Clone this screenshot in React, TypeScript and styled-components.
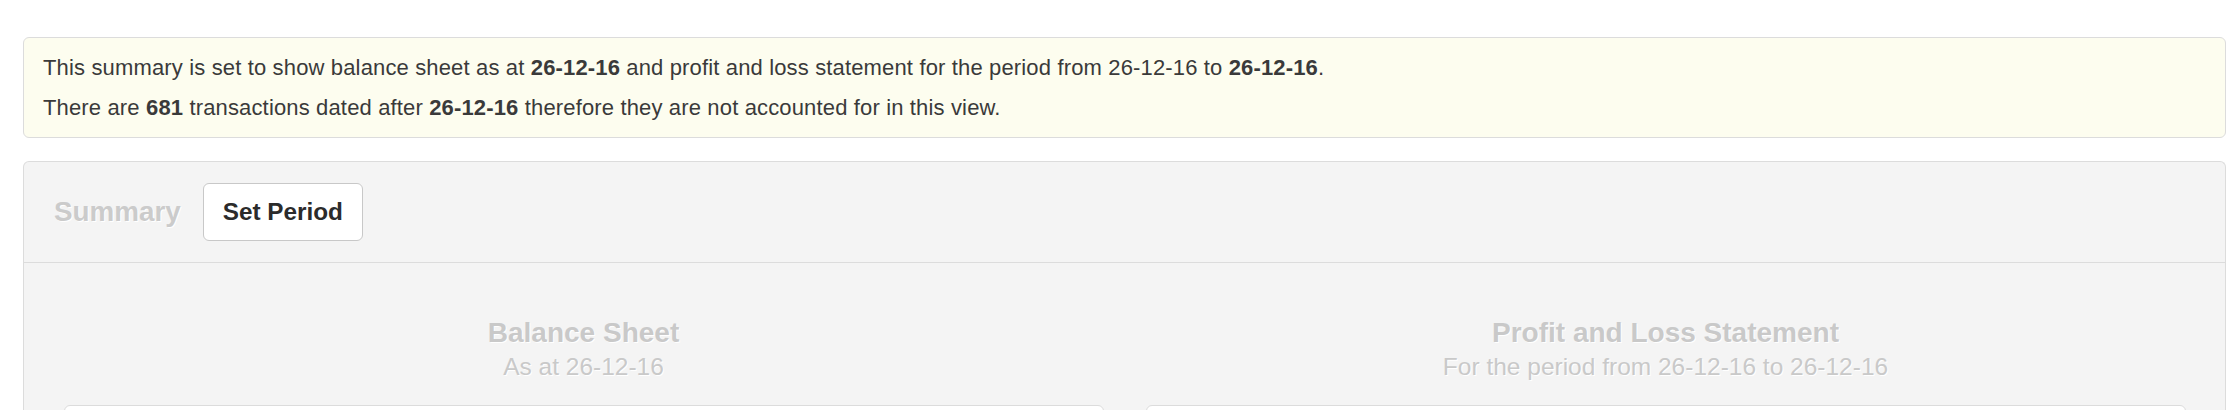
import * as React from 'react';
import styled, { createGlobalStyle } from 'styled-components';

const GlobalStyle = createGlobalStyle`
  html, body {
    margin: 0;
    padding: 0;
    background: #fff;
  }
  body {
    font-family: 'Liberation Sans', Arial, Helvetica, sans-serif;
    color: #333;
    overflow: hidden;
  }
`;

const Page = styled.div`
  padding: 37px 6px 0 23px;
`;

const Notice = styled.div`
  background-color: #fdfdef;
  border: 1.4px solid #dcdcdc;
  border-radius: 6px;
  padding: 16px 19px 15px;
  font-size: 22px;
  letter-spacing: 0.15px;
  color: #3a3a3a;
`;

const NoticeLine = styled.p`
  margin: 0;
  line-height: 28px;

  & + & {
    margin-top: 12px;
  }

  b {
    font-weight: bold;
  }
`;

const Panel = styled.div`
  margin-top: 23px;
  background-color: #f4f4f4;
  border: 1.4px solid #dcdcdc;
  border-bottom: none;
  border-radius: 6px 6px 0 0;
  height: 260px;
`;

const PanelHeader = styled.div`
  display: flex;
  align-items: center;
  gap: 22px;
  height: 100px;
  padding: 0 30px;
  border-bottom: 1.4px solid #dcdcdc;
`;

const Muted = styled.span`
  font-size: 27.8px;
  font-weight: bold;
  color: #cbcbcb;
  text-shadow: 1px 1px 0 #fff;
`;

const Button = styled.button`
  display: flex;
  align-items: center;
  height: 58px;
  padding: 0 19px;
  font-family: inherit;
  font-size: 24.3px;
  font-weight: bold;
  color: #2b2b2b;
  background: #fff;
  border: 1.4px solid #c8c8c8;
  border-radius: 6px;
  cursor: pointer;
`;

const PanelBody = styled.div`
  display: grid;
  grid-template-columns: 1fr 1fr;
  padding: 54px 18.5px 0;
`;

const Column = styled.div`
  padding: 0 21px;
  text-align: center;
`;

const Title = styled.div`
  font-size: 28px;
  font-weight: bold;
  line-height: 31px;
  color: #c9c9c9;
  text-shadow: 1px 1px 0 #fff;
`;

const Subtitle = styled.div`
  margin-top: 5px;
  font-size: 24.5px;
  line-height: 28px;
  color: #c9c9c9;
  text-shadow: 1px 1px 0 #fff;
`;

const Sheet = styled.div`
  margin-top: 24px;
  height: 120px;
  background: #fff;
  border: 1.4px solid #dcdcdc;
  border-radius: 6px;
`;

const App: React.FC = () => {
  return (
    <Page>
      <GlobalStyle />
      <Notice>
        <NoticeLine>
          This summary is set to show balance sheet as at <b>26-12-16</b> and
          profit and loss statement for the period from 26-12-16 to{' '}
          <b>26-12-16</b>.
        </NoticeLine>
        <NoticeLine>
          There are <b>681</b> transactions dated after <b>26-12-16</b>{' '}
          therefore they are not accounted for in this view.
        </NoticeLine>
      </Notice>

      <Panel>
        <PanelHeader>
          <Muted>Summary</Muted>
          <Button type="button">Set Period</Button>
        </PanelHeader>
        <PanelBody>
          <Column>
            <Title>Balance Sheet</Title>
            <Subtitle>As at 26-12-16</Subtitle>
            <Sheet />
          </Column>
          <Column>
            <Title>Profit and Loss Statement</Title>
            <Subtitle>For the period from 26-12-16 to 26-12-16</Subtitle>
            <Sheet />
          </Column>
        </PanelBody>
      </Panel>
    </Page>
  );
};

export default App;
